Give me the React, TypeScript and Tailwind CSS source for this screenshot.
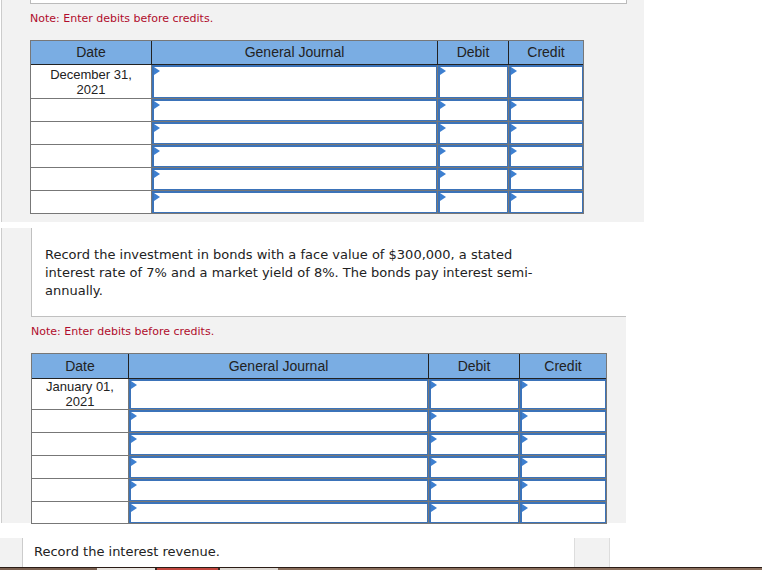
import React from "react";

type Cols = { date: number; gj: number; debit: number; credit: number };

function Tri() {
  return (
    <div className="absolute left-0 top-0 w-0 h-0 border-y-[4px] border-y-transparent border-l-[6px] border-l-[#3d7fd0]" />
  );
}

function InputCell({ w }: { w: number }) {
  return (
    <div className="bg-white p-0" style={{ width: w }}>
      <div className="relative h-full border-t-2 border-l-2 border-r border-b border-[#3b73b9]">
        <Tri />
      </div>
    </div>
  );
}

function Journal({
  cols,
  headH,
  firstH,
  rowH,
  lastH,
  date,
  datePt,
}: {
  cols: Cols;
  headH: number;
  firstH: number;
  rowH: number;
  lastH: number;
  date: [string, string];
  datePt: number;
}) {
  const rows = [firstH, rowH, rowH, rowH, rowH, lastH];
  const head = "bg-[#7aade3] flex items-center justify-center text-[14px]";
  return (
    <div className="border border-[#777777] bg-[#777777] w-fit font-['Liberation_Sans',Arial,sans-serif] text-[13px] text-[#222222]">
      <div className="flex gap-px bg-[#222222] border-b border-[#222222]">
        <div className={head} style={{ width: cols.date, height: headH }}>
          Date
        </div>
        <div className={head} style={{ width: cols.gj, height: headH }}>
          General Journal
        </div>
        <div className={head} style={{ width: cols.debit, height: headH }}>
          Debit
        </div>
        <div className={head} style={{ width: cols.credit, height: headH }}>
          Credit
        </div>
      </div>
      <div className="flex flex-col gap-px">
        {rows.map((h, i) => (
          <div key={i} className="flex gap-px" style={{ height: h }}>
            <div
              className="bg-white text-center leading-[15px]"
              style={{ width: cols.date, paddingTop: i === 0 ? datePt : 0 }}
            >
              {i === 0 ? (
                <>
                  {date[0]}
                  <br />
                  {date[1]}
                </>
              ) : null}
            </div>
            <InputCell w={cols.gj} />
            <InputCell w={cols.debit} />
            <InputCell w={cols.credit} />
          </div>
        ))}
      </div>
    </div>
  );
}

const noteCls =
  "font-['DejaVu_Sans',Verdana,sans-serif] text-[11px] leading-[14px] h-[14px] text-[#b00c2c]";

export default function App() {
  return (
    <div className="w-[762px] h-[570px] bg-white overflow-hidden flex flex-col">
      {/* Section 1 */}
      <div className="ml-px w-[643px] h-[222px] flex-none bg-[#f2f2f2] border-l border-[#cccccc] pl-[28px] flex flex-col">
        <div className="w-[597px] h-[4px] bg-white border-x border-b border-[#bbbbbb]" />
        <div className={`mt-[8px] ${noteCls}`}>Note: Enter debits before credits.</div>
        <div className="mt-[14px]">
          <Journal
            cols={{ date: 120, gj: 285, debit: 70, credit: 74 }}
            headH={23}
            firstH={33}
            rowH={22}
            lastH={22}
            date={["December 31,", "2021"]}
            datePt={2}
          />
        </div>
      </div>

      {/* Section 2 */}
      <div className="mt-[6px] ml-px w-[625px] h-[295px] flex-none bg-[#f2f2f2] border-l border-[#cccccc] pl-[29px] flex flex-col">
        <div className="bg-white border-l border-b border-[#c0c0c0] pt-[18px] pb-[16px] pl-[13px] font-['DejaVu_Sans',Verdana,sans-serif] text-[13px] leading-[18px] text-[#222222]">
          Record the investment in bonds with a face value of $300,000, a stated
          <br />
          interest rate of 7% and a market yield of 8%. The bonds pay interest semi-
          <br />
          annually.
        </div>
        <div className={`mt-[8px] ${noteCls}`}>Note: Enter debits before credits.</div>
        <div className="mt-[14px]">
          <Journal
            cols={{ date: 96, gj: 299, debit: 90, credit: 86 }}
            headH={24}
            firstH={30}
            rowH={22}
            lastH={21}
            date={["January 01,", "2021"]}
            datePt={0}
          />
        </div>
      </div>

      {/* Section 3 */}
      <div className="mt-[15px] flex h-[29px] flex-none">
        <div className="w-[23px] bg-[#f2f2f2] border-r border-[#cccccc]" />
        <div className="w-[551px] bg-white pl-[11px] pt-[5px] font-['DejaVu_Sans',Verdana,sans-serif] text-[13px] leading-[18px] text-[#222222]">
          Record the interest revenue.
        </div>
        <div className="w-[36px] bg-[#f2f2f2] border-x border-[#dddddd]" />
      </div>

      {/* Bottom bar */}
      <div className="flex-none h-[3px] flex border-t border-[#2a1c16] bg-[#6b5446]">
        <div className="w-[97px] bg-[#7a6050]" />
        <div className="w-[58px] bg-[#e8e4df]" />
        <div className="w-[2px] bg-[#3a2a22]" />
        <div className="w-[61px] bg-[#c2473f]" />
        <div className="w-[2px] bg-[#3a2a22]" />
        <div className="w-[58px] bg-[#ddd8d2]" />
        <div className="flex-1 bg-[#8a6e5c]" />
      </div>
    </div>
  );
}
